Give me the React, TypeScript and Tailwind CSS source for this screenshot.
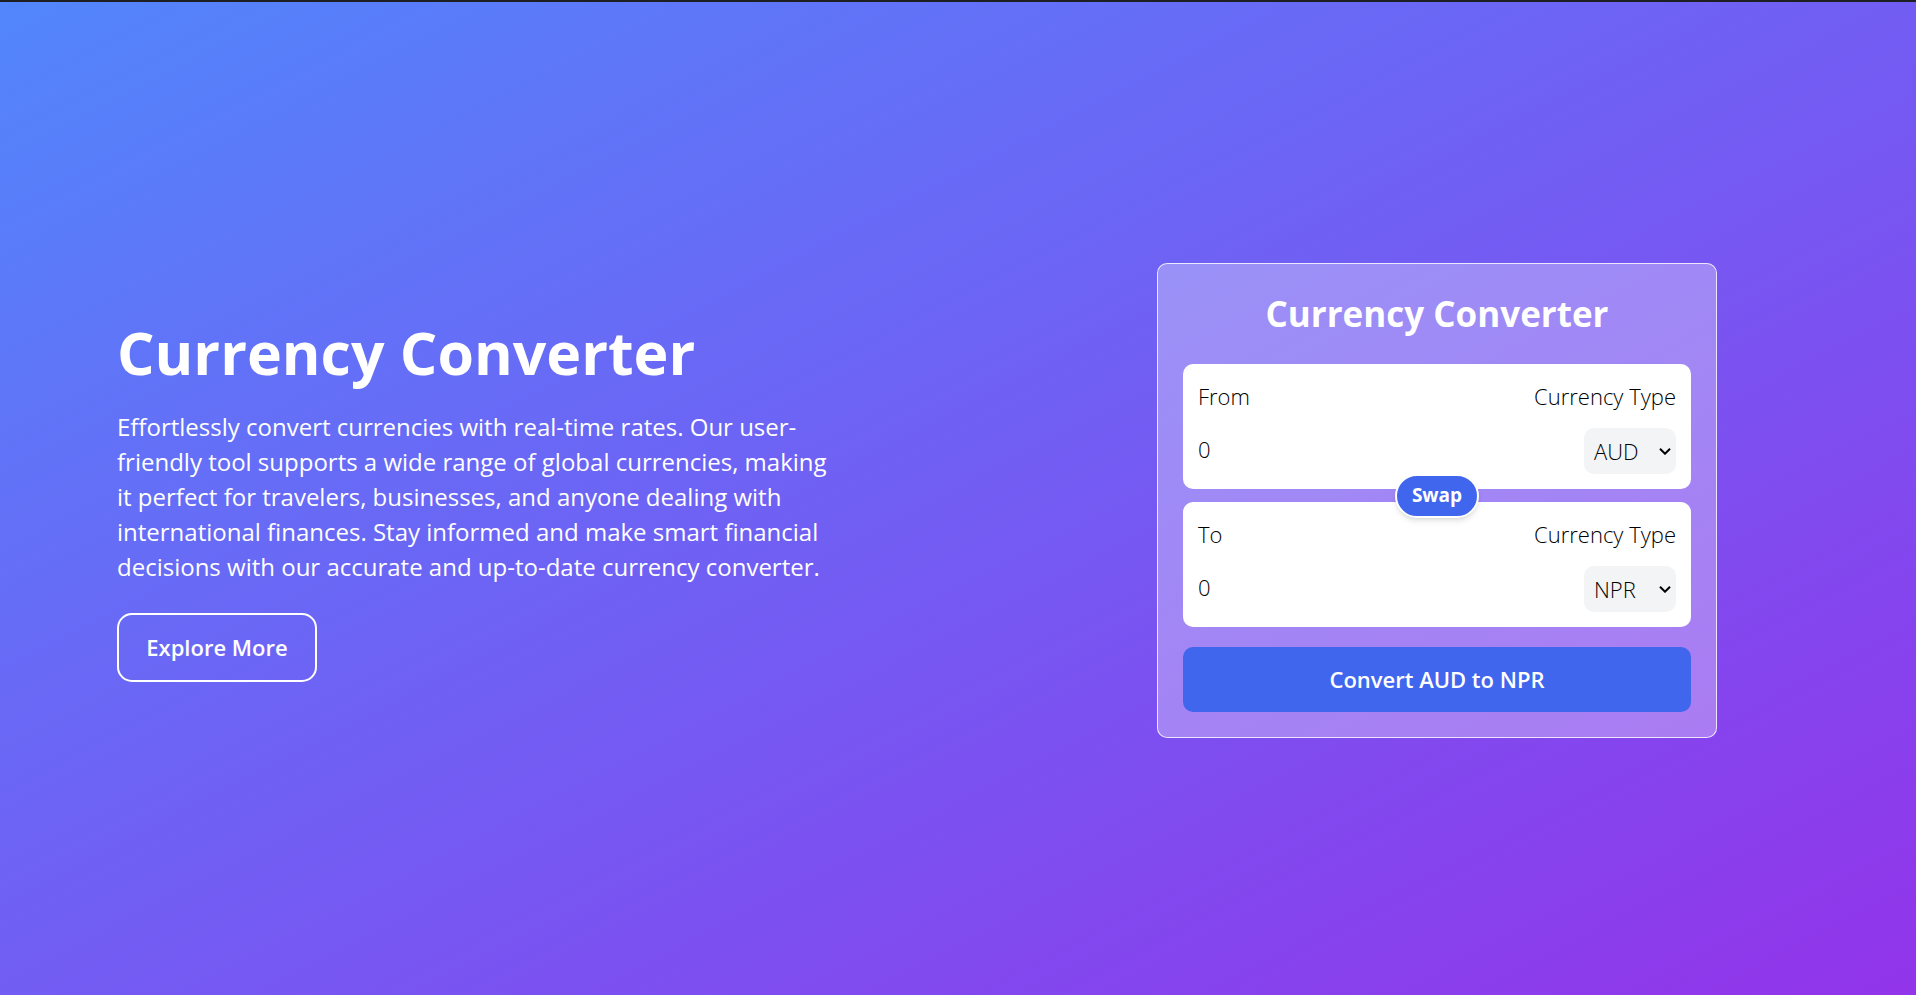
import { useState } from "react";

const CURRENCIES = ["AUD", "NPR", "USD", "EUR", "GBP", "INR"];

type CurrencyBoxProps = {
  id: string;
  label: string;
  amount: string;
  currency: string;
  readOnly?: boolean;
  onAmount?: (value: string) => void;
  onCurrency: (value: string) => void;
};

function CurrencyBox({ id, label, amount, currency, readOnly, onAmount, onCurrency }: CurrencyBoxProps) {
  return (
    <div className="flex justify-between rounded-[10px] bg-white p-[15px] text-[22px] leading-[35px] font-light text-black">
      <div className="flex min-w-0 flex-1 flex-col gap-[14px]">
        <label htmlFor={`${id}-amount`}>{label}</label>
        <input
          id={`${id}-amount`}
          className="h-[42px] w-full bg-transparent outline-none"
          inputMode="decimal"
          value={amount}
          readOnly={readOnly}
          onChange={(e) => onAmount?.(e.target.value)}
        />
      </div>
      <div className="flex flex-col items-end gap-[14px]">
        <label htmlFor={`${id}-currency`}>Currency Type</label>
        <div className="relative">
          <select
            id={`${id}-currency`}
            className="block h-[46px] w-[92px] appearance-none rounded-[10px] bg-gray-100 px-[10px] outline-none"
            value={currency}
            onChange={(e) => onCurrency(e.target.value)}
          >
            {CURRENCIES.map((c) => (
              <option key={c} value={c}>
                {c}
              </option>
            ))}
          </select>
          <svg
            className="pointer-events-none absolute top-1/2 right-[5px] h-2 w-3 -translate-y-1/2"
            viewBox="0 0 12 8"
            fill="none"
            stroke="black"
            strokeWidth="2"
            aria-hidden="true"
          >
            <path d="M1 1.7 6 6.7 11 1.7" />
          </svg>
        </div>
      </div>
    </div>
  );
}

export default function App() {
  const [amount, setAmount] = useState("0");
  const [result, setResult] = useState("0");
  const [from, setFrom] = useState("AUD");
  const [to, setTo] = useState("NPR");

  const swap = () => {
    setFrom(to);
    setTo(from);
    setAmount(result);
    setResult(amount);
  };

  return (
    <main className="grid min-h-screen grid-cols-1 items-center border-t-2 border-[#1e1f22] bg-linear-to-br/srgb from-[#5286fc] to-[#9234ea] pt-1 font-['Open_Sans',sans-serif] text-white lg:grid-cols-2">
      <section className="mx-auto w-full max-w-[724px] pb-[2px]">
        <h1 className="mb-[22px] text-[59px] leading-[70px] font-bold">Currency Converter</h1>
        <p className="mb-[29px] text-[24px] leading-[35px]">
          Effortlessly convert currencies with real-time rates. Our user-friendly tool supports a wide range of global
          currencies, making it perfect for travelers, businesses, and anyone dealing with international finances. Stay
          informed and make smart financial decisions with our accurate and up-to-date currency converter.
        </p>
        <button className="h-[69px] w-[200px] rounded-[15px] border-2 border-white text-[22px] font-semibold">
          Explore More
        </button>
      </section>

      <section className="mx-auto w-full max-w-[560px] rounded-[10px] border border-white/80 bg-white/30 p-[25px]">
        <h2 className="mb-[25px] text-center text-[35px] leading-[50px] font-bold">Currency Converter</h2>
        <form className="flex flex-col" onSubmit={(e) => e.preventDefault()}>
          <div className="relative flex flex-col gap-[13px]">
            <CurrencyBox
              id="from"
              label="From"
              amount={amount}
              currency={from}
              onAmount={setAmount}
              onCurrency={setFrom}
            />
            <CurrencyBox id="to" label="To" amount={result} currency={to} readOnly onCurrency={setTo} />
            <button
              type="button"
              onClick={swap}
              className="absolute top-1/2 left-1/2 h-11 w-[84px] -translate-x-1/2 -translate-y-1/2 rounded-full border-2 border-white bg-[#4066ee] text-[19px] font-bold shadow-md"
            >
              Swap
            </button>
          </div>
          <button type="submit" className="mt-5 h-[65px] rounded-[10px] bg-[#4066ee] text-[22px] font-semibold">
            Convert {from} to {to}
          </button>
        </form>
      </section>
    </main>
  );
}
